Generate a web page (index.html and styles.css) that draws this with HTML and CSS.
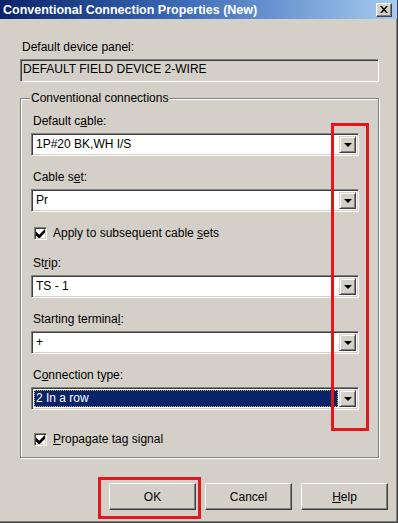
FILE: index.html
```html
<!DOCTYPE html>
<html lang="en">
<head>
    <meta charset="UTF-8">
    <title>Conventional Connection Properties (New)</title>
    <link rel="stylesheet" href="styles.css">
</head>
<body>
    <div class="window">
        <div class="titlebar">
            <span class="title">Conventional Connection Properties (New)</span>
            <span class="close-btn">
                <svg width="8" height="7" viewBox="0 0 8 7"><path d="M0 0h2l2 2.5L6 0h2L5 3.5 8 7H6L4 4.5 2 7H0l3-3.5z" fill="#000"/></svg>
            </span>
        </div>

        <div class="content">
            <div class="label top-label">Default device panel:</div>
            <div class="textbox disabled">DEFAULT FIELD DEVICE 2-WIRE</div>

            <fieldset class="group">
                <legend>Conventional connections</legend>

                <div class="label">Default c<u>a</u>ble:</div>
                <div class="combo">
                    <span class="combo-text">1P#20 BK,WH I/S</span>
                    <span class="drop"><i class="arrow"></i></span>
                </div>

                <div class="label">Cable s<u>e</u>t:</div>
                <div class="combo">
                    <span class="combo-text">Pr</span>
                    <span class="drop"><i class="arrow"></i></span>
                </div>

                <div class="check-row first-check">
                    <span class="checkbox">
                        <svg width="9" height="9" viewBox="0 0 7 7"><path d="M0 2v3l2 2h1l4-4V0L2.5 4.5z" fill="#000"/></svg>
                    </span>
                    <span>Apply to subsequent cable <u>s</u>ets</span>
                </div>

                <div class="label after-check">St<u>r</u>ip:</div>
                <div class="combo">
                    <span class="combo-text">TS - 1</span>
                    <span class="drop"><i class="arrow"></i></span>
                </div>

                <div class="label">Starting termina<u>l</u>:</div>
                <div class="combo">
                    <span class="combo-text">+</span>
                    <span class="drop"><i class="arrow"></i></span>
                </div>

                <div class="label">C<u>o</u>nnection type:</div>
                <div class="combo">
                    <span class="combo-text selected">2 In a row</span>
                    <span class="drop"><i class="arrow"></i></span>
                </div>

                <div class="check-row last-check">
                    <span class="checkbox">
                        <svg width="9" height="9" viewBox="0 0 7 7"><path d="M0 2v3l2 2h1l4-4V0L2.5 4.5z" fill="#000"/></svg>
                    </span>
                    <span><u>P</u>ropagate tag signal</span>
                </div>
            </fieldset>

            <div class="buttons">
                <button class="btn">OK</button>
                <button class="btn">Cancel</button>
                <button class="btn"><u>H</u>elp</button>
            </div>
        </div>

        <!-- markup boxes drawn over the dialog -->
        <div class="mark mark-drops"></div>
        <div class="mark mark-ok"></div>
    </div>
</body>
</html>
```

FILE: styles.css
```css
body {
    margin: 0;
    padding: 0;
    font-family: "Liberation Sans", Arial, sans-serif;
    font-size: 12px;
    color: #000;
    background-color: #d4d0c8;
}

.window {
    position: relative;
    width: 398px;
    height: 523px;
    box-sizing: border-box;
    background-color: #d4d0c8;
    border-right: 1px solid #404040;
    border-bottom: 1px solid #404040;
    box-shadow: inset -1px -1px 0 #808080;
    overflow: hidden;
}

.titlebar {
    height: 19px;
    display: flex;
    align-items: center;
    justify-content: space-between;
    padding: 0 5px 0 3px;
    background: linear-gradient(to right, #0a246a, #3a6ab8 45%, #a6caf0);
    color: #fff;
}

.title {
    font-weight: bold;
    font-size: 12.5px;
}

.close-btn {
    width: 16px;
    height: 14px;
    box-sizing: border-box;
    display: flex;
    align-items: center;
    justify-content: center;
    background-color: #d4d0c8;
    border-top: 1px solid #fff;
    border-left: 1px solid #fff;
    border-right: 1px solid #404040;
    border-bottom: 1px solid #404040;
    box-shadow: inset -1px -1px 0 #808080;
}

.content {
    padding: 0 18px 0 20px;
}

.label {
    line-height: 14px;
    margin: 14px 0 5px 2px;
}

.top-label {
    margin-top: 21px;
}

.textbox {
    height: 23px;
    box-sizing: border-box;
    line-height: 19px;
    padding-left: 2px;
    border-top: 1px solid #808080;
    border-left: 1px solid #808080;
    border-right: 1px solid #fff;
    border-bottom: 1px solid #fff;
    box-shadow: inset 1px 1px 0 #404040, inset -1px -1px 0 #d4d0c8;
}

.disabled {
    background-color: #d4d0c8;
}

.group {
    margin: 9px 0 0 0;
    padding: 0 19px 11px 10px;
    border: 1px solid #808080;
    box-shadow: 1px 1px 0 #fff, inset 1px 1px 0 #fff;
}

.group legend {
    padding: 0 1px;
    margin-left: -1px;
    line-height: 14px;
    background-color: #d4d0c8;
}

.group .label:first-of-type {
    margin-top: 9px;
}

.group .label.after-check {
    margin-top: 16px;
}

.combo {
    height: 23px;
    box-sizing: border-box;
    display: flex;
    background-color: #fff;
    border-top: 1px solid #808080;
    border-left: 1px solid #808080;
    border-right: 1px solid #fff;
    border-bottom: 1px solid #fff;
    box-shadow: inset 1px 1px 0 #404040, inset -1px -1px 0 #d4d0c8;
    padding: 2px;
}

.combo-text {
    flex: 1;
    line-height: 17px;
    padding-left: 2px;
}

.combo-text.selected {
    background-color: #0a246a;
    color: #fff;
    outline: 1px dotted #c8b070;
    outline-offset: -1px;
    margin-right: 1px;
}

.drop {
    width: 17px;
    box-sizing: border-box;
    display: flex;
    align-items: center;
    justify-content: center;
    background-color: #d4d0c8;
    border-top: 1px solid #d4d0c8;
    border-left: 1px solid #d4d0c8;
    border-right: 1px solid #404040;
    border-bottom: 1px solid #404040;
    box-shadow: inset 1px 1px 0 #fff, inset -1px -1px 0 #808080;
}

.arrow {
    width: 0;
    height: 0;
    margin-top: 1px;
    border-left: 4px solid transparent;
    border-right: 4px solid transparent;
    border-top: 4px solid #000;
}

.check-row {
    display: flex;
    align-items: center;
    gap: 6px;
    line-height: 14px;
    margin-left: 3px;
}

.first-check {
    margin-top: 14px;
}

.last-check {
    margin-top: 22px;
}

.checkbox {
    width: 13px;
    height: 13px;
    box-sizing: border-box;
    display: flex;
    align-items: center;
    justify-content: center;
    background-color: #fff;
    border-top: 1px solid #808080;
    border-left: 1px solid #808080;
    border-right: 1px solid #fff;
    border-bottom: 1px solid #fff;
    box-shadow: inset 1px 1px 0 #404040, inset -1px -1px 0 #d4d0c8;
}

.buttons {
    display: flex;
    justify-content: flex-end;
    gap: 9px;
    margin: 25px -9px 0 0;
}

.btn {
    width: 87px;
    height: 27px;
    box-sizing: border-box;
    font-family: "Liberation Sans", Arial, sans-serif;
    font-size: 12px;
    color: #000;
    background-color: #d4d0c8;
    border-top: 1px solid #fff;
    border-left: 1px solid #fff;
    border-right: 1px solid #404040;
    border-bottom: 1px solid #404040;
    box-shadow: inset -1px -1px 0 #808080;
    padding: 0;
}

.mark {
    position: absolute;
    border: 3px solid #e8141c;
    box-sizing: border-box;
}

.mark-drops {
    left: 331px;
    top: 123px;
    width: 38px;
    height: 308px;
}

.mark-ok {
    left: 98px;
    top: 477px;
    width: 103px;
    height: 42px;
}
```
